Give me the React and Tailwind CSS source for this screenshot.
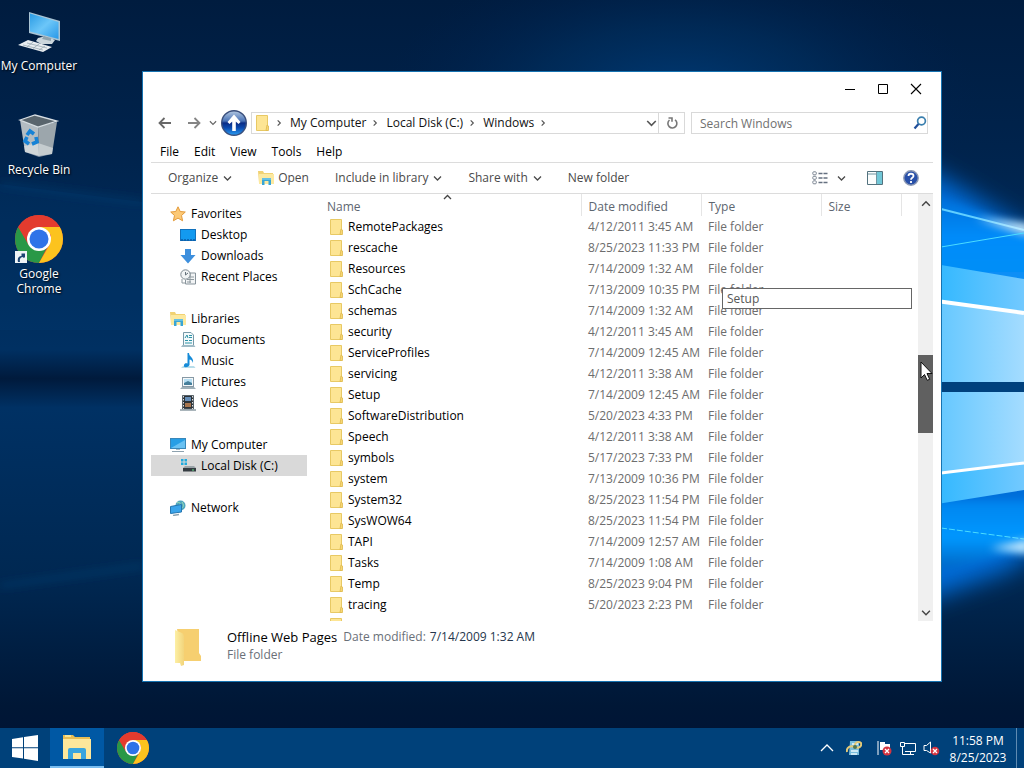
import React from "react";

const folders = [
  ["RemotePackages", "4/12/2011 3:45 AM"],
  ["rescache", "8/25/2023 11:33 PM"],
  ["Resources", "7/14/2009 1:32 AM"],
  ["SchCache", "7/13/2009 10:35 PM"],
  ["schemas", "7/14/2009 1:32 AM"],
  ["security", "4/12/2011 3:45 AM"],
  ["ServiceProfiles", "7/14/2009 12:45 AM"],
  ["servicing", "4/12/2011 3:38 AM"],
  ["Setup", "7/14/2009 12:45 AM"],
  ["SoftwareDistribution", "5/20/2023 4:33 PM"],
  ["Speech", "4/12/2011 3:38 AM"],
  ["symbols", "5/17/2023 7:33 PM"],
  ["system", "7/13/2009 10:36 PM"],
  ["System32", "8/25/2023 11:54 PM"],
  ["SysWOW64", "8/25/2023 11:54 PM"],
  ["TAPI", "7/14/2009 12:57 AM"],
  ["Tasks", "7/14/2009 1:08 AM"],
  ["Temp", "8/25/2023 9:04 PM"],
  ["tracing", "5/20/2023 2:23 PM"],
];

function Wallpaper() {
  return (
    <svg className="absolute inset-0 h-full w-full" viewBox="0 0 1024 728" preserveAspectRatio="none" aria-hidden="true">
      <defs>
        <linearGradient id="base" x1="0" y1="0" x2="0" y2="1">
          <stop offset="0" stopColor="#001c3f" />
          <stop offset="0.2" stopColor="#00234c" />
          <stop offset="0.48" stopColor="#003062" />
          <stop offset="0.52" stopColor="#001a3c" />
          <stop offset="0.56" stopColor="#003164" />
          <stop offset="0.79" stopColor="#002852" />
          <stop offset="0.97" stopColor="#001736" />
          <stop offset="1" stopColor="#001536" />
        </linearGradient>
        <radialGradient id="topGlow">
          <stop offset="0" stopColor="#004080" stopOpacity="0.85" />
          <stop offset="0.5" stopColor="#003468" stopOpacity="0.5" />
          <stop offset="1" stopColor="#002050" stopOpacity="0" />
        </radialGradient>
        <linearGradient id="upper" x1="0" y1="0" x2="0" y2="1">
          <stop offset="0" stopColor="#0068d0" />
          <stop offset="0.5" stopColor="#008cfa" />
          <stop offset="1" stopColor="#0a90f5" />
        </linearGradient>
        <linearGradient id="lower" x1="0" y1="0" x2="0" y2="1">
          <stop offset="0" stopColor="#0084ee" />
          <stop offset="0.5" stopColor="#0098ff" />
          <stop offset="1" stopColor="#005cb8" />
        </linearGradient>
        <linearGradient id="beam" gradientUnits="userSpaceOnUse" x1="941" y1="0" x2="1024" y2="0">
          <stop offset="0" stopColor="#35b9ff" />
          <stop offset="1" stopColor="#72c9ff" />
        </linearGradient>
        <linearGradient id="pane" gradientUnits="userSpaceOnUse" x1="941" y1="0" x2="1024" y2="0">
          <stop offset="0" stopColor="#66c8ff" />
          <stop offset="1" stopColor="#a4dcff" />
        </linearGradient>
        <filter id="soft" x="-50%" y="-50%" width="200%" height="200%"><feGaussianBlur stdDeviation="12" /></filter>
        <filter id="glow" x="-50%" y="-50%" width="200%" height="200%"><feGaussianBlur stdDeviation="4" /></filter>
        <filter id="thin" x="-20%" y="-50%" width="140%" height="200%"><feGaussianBlur stdDeviation="0.7" /></filter>
      </defs>
      <rect width="1024" height="728" fill="url(#base)" />
      <ellipse cx="680" cy="100" rx="300" ry="150" fill="url(#topGlow)" />
      <path d="M0 184 L143 202" stroke="#0a4a80" strokeWidth="2" filter="url(#glow)" />
      <path d="M0 184 L143 202 V330 H0Z" fill="#003a75" opacity="0.25" />
      <path d="M0 586 L143 566" stroke="#0a4a80" strokeWidth="2" filter="url(#glow)" />
      <path d="M900 155 L955 185 L1060 250 V530 L1010 570 L900 610Z" fill="#006cd8" filter="url(#soft)" />
      <path d="M900 185 L960 205 L1034 236 V290 H900Z" fill="url(#upper)" filter="url(#glow)" />
      <path d="M900 500 H1034 V545 L960 566 L900 575Z" fill="url(#lower)" filter="url(#glow)" />
      <path d="M941 209 L1024 230" stroke="#61cfff" strokeWidth="2" filter="url(#thin)" />
      <path d="M975 218 L1030 224 V236 Z" fill="#d5f1ff" filter="url(#glow)" />
      <path d="M941 247 L1024 233" stroke="#4bdcff" strokeWidth="1" />
      <path d="M900 262 L941 265 L1024 279 V382 H900Z" fill="url(#beam)" />
      <path d="M900 297 L1024 314 V382 H900Z" fill="url(#pane)" />
      <path d="M900 296 L1024 313" stroke="#fff" strokeWidth="4" filter="url(#thin)" />
      <rect x="900" y="382" width="124" height="10" fill="#00417d" />
      <path d="M900 392 H1024 V490 L900 510Z" fill="url(#beam)" />
      <path d="M900 392 H1024 V463 L900 478Z" fill="url(#pane)" />
      <path d="M900 478 L1024 463" stroke="#fff" strokeWidth="3" filter="url(#thin)" />
      <path d="M941 528 L1024 539" stroke="#4bdcff" strokeWidth="1" strokeDasharray="6 2" />
      <path d="M990 548 L1030 539 V554 Z" fill="#c5eaff" filter="url(#glow)" />
    </svg>
  );
}

function Chrome({ className, id }) {
  return (
    <svg className={className} viewBox="0 0 48 48" aria-hidden="true">
      <defs><clipPath id={id}><circle cx="24" cy="24" r="24" /></clipPath></defs>
      <g clipPath={`url(#${id})`}>
        <rect width="48" height="48" fill="#ea4335" />
        <path d="M3.2 12 L14.5 29.5 L24 35 L33.5 29.5 L24 48 H0 V12Z" fill="#299847" />
        <path d="M24 12 H48 V48 H24 L34.4 30 L36 20Z" fill="#fcc31e" />
        <path d="M3.2 12 L13.6 30 L24 12 H44.8 L40 0 H6Z" fill="#e33b2e" />
      </g>
      <circle cx="24" cy="24" r="12" fill="#fff" />
      <circle cx="24" cy="24" r="9.5" fill="#2f73e8" />
    </svg>
  );
}

function ComputerArt() {
  return (
    <svg className="h-12 w-12" viewBox="0 0 48 48" aria-hidden="true">
      <defs><linearGradient id="scr" x1="0" y1="0" x2="1" y2="1"><stop offset="0" stopColor="#2a9be4" /><stop offset="0.5" stopColor="#6cc6f8" /><stop offset="1" stopColor="#2898e8" /></linearGradient></defs>
      <path d="M14 5 L45 14 V34 L14 26Z" fill="#a9c4d4" />
      <path d="M15 6.5 L43.500 15 V32 L15 24.500Z" fill="url(#scr)" />
      <path d="M23 31 L31 29 L40 33 L37 37 H26 L21 34Z" fill="#cbd6dc" />
      <path d="M29 29 L36 31 V34 L27 32Z" fill="#8fa2ad" />
      <path d="M3 38 L13 33 L37 40 L28 45Z" fill="#e8edf0" />
      <path d="M8 38 L28 43 M12 36 L32 41 M12 40 L18 35 M18 41.500 L24 37 M24 43 L30 39" stroke="#8fa0aa" strokeWidth="0.7" />
    </svg>
  );
}

function BinArt() {
  return (
    <svg className="h-12 w-12" viewBox="0 0 48 48" aria-hidden="true">
      <path d="M5 9 L23 15 L24 45 L10 41Z" fill="#b3bcc2" />
      <path d="M42 11 L23 15 L24 45 L37 43Z" fill="#9ca6ac" />
      <path d="M5 9 L20 4 L42 10 L23 16Z" fill="#59656d" stroke="#d7dee2" strokeWidth="1.300" />
      <path d="M9 35 L23 32 L38 37 L37 43 L24 46 L10 41Z" fill="#e8ebed" opacity="0.55" />
      <g fill="none" stroke="#1682d6" strokeWidth="3.600">
        <path d="M12 24 L15 20 L19 23" /><path d="M21 26 L22 31 L17 33" /><path d="M14 33 L10 30 L12 26" />
      </g>
    </svg>
  );
}

function FolderIcon() {
  return (
    <svg className="h-4 w-[15px] shrink-0" viewBox="0 0 15 16" aria-hidden="true">
      <path d="M1.500 .5 H12.500 V15.500 H1.500Z" fill="#fde594" stroke="#e8c964" />
      <path d="M12 10 L13.500 11 V15.500 H11Z" fill="#f8d774" stroke="#ddb94e" strokeWidth="0.8" />
    </svg>
  );
}

function LibraryIcon({ className = "h-4 w-4" }) {
  return (
    <svg className={className} viewBox="0 0 16 16" aria-hidden="true">
      <path d="M0 1 H5 L6 3 H15 V13 H1Z" fill="#f1d273" />
      <path d="M1 4 H16 V14 H1Z" fill="#fce9a0" />
      <path d="M4 8 H13 V15 H10.500 V11 H6.500 V15 H4Z" fill="#38a5d6" />
      <path d="M4 8 H13 V10 H4Z" fill="#65c0e4" />
    </svg>
  );
}

function Chevron({ dir = "down", className = "h-[9px] w-[9px]" }) {
  const paths = { down: "M1 2.500 L4.500 6 L8 2.500", up: "M1 6 L4.500 2.500 L8 6", right: "M3 1.500 L6 4.500 L3 7.500" };
  return (
    <svg className={`shrink-0 ${className}`} viewBox="0 0 9 9" fill="none" stroke="currentColor" strokeWidth="1.300" aria-hidden="true">
      <path d={paths[dir]} />
    </svg>
  );
}

const art = {
  star: <path d="M8 .8 L10.200 5.500 L15.300 6 L11.500 9.500 L12.600 14.800 L8 12.100 L3.400 14.800 L4.500 9.500 L.7 6 L5.800 5.500Z" fill="#fcc976" stroke="#e39a3a" />,
  desktop: <><rect x=".5" y="2.500" width="15" height="11" fill="#139af0" stroke="#1272bd" /><path d="M1 13 H15" stroke="#0a5ca8" strokeWidth="1.500" strokeDasharray="2 1" /></>,
  down: <path d="M5 1 H11 V7 H15.500 L8 15.500 L.5 7 H5Z" fill="#3d8fdd" />,
  recent: <><path d="M6 4 H15.500 V15 H5.500 V11" fill="#f2f4f5" stroke="#87939b" /><path d="M7 8 H14 M7 10.500 H14 M7 13 H11 M10 4 V14" stroke="#8e999f" /><circle cx="5.500" cy="5.500" r="4.700" fill="#f1f4f5" stroke="#7d8990" /><path d="M5.500 3 V6 L8 4" fill="none" stroke="#65727a" /><path d="M2 10 V14 H6" fill="none" stroke="#8e999f" /></>,
  doc: <><path d="M3.500 .5 H11 L13.500 3 V14 H3.500Z" fill="#f3f9fb" stroke="#7799a8" /><path d="M5 6 L7 3 L8 6 M9 3.500 H12 M9 5.500 H12 M5 8.500 H8 M9 8.500 H12 M5 11 H12" fill="none" stroke="#2e94a8" /><path d="M1 15 L2.500 13 H14 L15.500 15Z" fill="#9fbac5" /></>,
  music: <><path d="M1 15 L3 13 H14 L15.500 15Z" fill="#b8ddea" /><path d="M9 0 C9 4 14 4 13 10 C12 7 11 7 9.500 6.500 V12 C8 15 3 15 4 12 C4.500 10 6 10 7.500 10.500 V0Z" fill="#168bd8" /></>,
  picture: <><rect x="2.500" y="3.500" width="11" height="9" fill="#f5f8fa" stroke="#8799a5" /><path d="M4 5 H12 V11 H4Z" fill="#b7dff3" /><path d="M4 9 L8 7 L12 9 V11 H4Z" fill="#467f9b" /><path d="M0 15 L2 13 H14 L16 15Z" fill="#9eafb8" /></>,
  video: <><path d="M2.500 .5 H13.500 V14 H2.500Z" fill="#2d3338" stroke="#59636a" /><path d="M5 2 H11 V6 H5Z" fill="#668eb8" /><path d="M5 8 H11 V12 H5Z" fill="#a8754e" /><path d="M3.500 1 V14 M12.500 1 V14" stroke="#dce1e4" strokeDasharray="1.500 1.500" /><path d="M0 15 H16" stroke="#8e9ca5" strokeWidth="1.500" /></>,
  computer: <><rect x=".5" y="1.500" width="15" height="10" fill="#279ee5" stroke="#3987b9" /><path d="M1 11 L15 3 V11Z" fill="#69c1f2" /><path d="M6 12 H10 V13 H6Z" fill="#a2bac7" /><path d="M2 14.500 H14" stroke="#8ea2af" /></>,
  disk: <><path d="M1 1 H3.500 V3.500 H1Z M4.500 1 H7 V3.500 H4.500Z M1 4.500 H3.500 V7 H1Z M4.500 4.500 H7 V7 H4.500Z" fill="#20aadd" /><path d="M3 10 L5 8 H14 L16 10Z" fill="#9ba4a9" /><path d="M3 10 H16 V13.500 H3Z" fill="#353c42" /><path d="M12 12 H14" stroke="#63df86" /></>,
  network: <><circle cx="10.500" cy="5.500" r="5" fill="#4fa5bf" /><path d="M7 3 C10 1 11 4 9 5 M12 2 C14 5 14 7 11 9" stroke="#9bdbb3" fill="none" /><path d="M.5 6.500 L11.500 4.500 V12 L.5 13.500Z" fill="#3ba5eb" stroke="#2476b0" /><path d="M3 15.500 L9 14.500" stroke="#8ca3b1" strokeWidth="1.500" /></>,
};

function SideIcon({ name }) {
  if (name === "library") return <LibraryIcon className="h-4 w-4 shrink-0" />;
  return <svg className="h-4 w-4 shrink-0" viewBox="0 0 16 16" aria-hidden="true">{art[name]}</svg>;
}

const groups = [
  { icon: "star", label: "Favorites", items: [["desktop", "Desktop"], ["down", "Downloads"], ["recent", "Recent Places"]] },
  { icon: "library", label: "Libraries", items: [["doc", "Documents"], ["music", "Music"], ["picture", "Pictures"], ["video", "Videos"]] },
  { icon: "computer", label: "My Computer", items: [["disk", "Local Disk (C:)"]] },
  { icon: "network", label: "Network", items: [] },
];

function Sidebar() {
  return (
    <nav aria-label="Places" className="flex w-[156px] shrink-0 flex-col gap-[21px] overflow-hidden pt-[9px]">
      {groups.map((g) => (
        <div key={g.label}>
          <button className="flex h-[21px] w-full items-center gap-[5px] pl-[19px] text-left"><SideIcon name={g.icon} />{g.label}</button>
          {g.items.map(([icon, label]) => (
            <button key={label} className={`flex h-[21px] w-full items-center gap-[5px] pl-[29px] text-left ${icon === "disk" ? "bg-[#d9d9d9]" : ""}`}>
              <SideIcon name={icon} />{label}
            </button>
          ))}
        </div>
      ))}
    </nav>
  );
}

function FileList() {
  return (
    <div className="relative ml-[14px] min-w-0 flex-1 overflow-hidden">
      <table className="w-full table-fixed border-collapse text-left text-[#6d6d6d]">
        <colgroup>
          <col /><col className="w-[120px]" /><col className="w-[120px]" /><col className="w-[80px]" /><col className="w-[17px]" />
        </colgroup>
        <thead>
          <tr className="h-[22px] text-[#5d6670]">
            <th className="relative pt-1 pl-[6px] font-normal">
              Name
              <Chevron dir="up" className="absolute -top-px left-[47%] h-[9px] w-[9px] text-[#444]" />
            </th>
            <th className="border-l border-[#e5e5e5] pt-1 pl-[7px] font-normal">Date modified</th>
            <th className="border-l border-[#e5e5e5] pt-1 pl-[7px] font-normal">Type</th>
            <th className="border-l border-[#e5e5e5] pt-1 pl-[7px] font-normal">Size</th>
            <td className="border-l border-[#e5e5e5]" />
          </tr>
        </thead>
        <tbody>
          {folders.map(([name, date]) => (
            <tr key={name} className="h-[21px] whitespace-nowrap">
              <td className="py-0 pl-2 text-black"><div className="flex items-center gap-1"><FolderIcon />{name}</div></td>
              <td className="py-0 pl-[7px]">{date}</td>
              <td className="py-0 pl-[7px]">File folder</td>
              <td /><td />
            </tr>
          ))}
          <tr className="h-[21px]"><td className="pl-2"><FolderIcon /></td><td /><td /><td /><td /></tr>
        </tbody>
      </table>
      <div role="tooltip" className="absolute top-[94px] right-[6px] flex h-[21px] w-[190px] items-center border border-[#666] bg-white pl-1 text-[#575757]">Setup</div>
    </div>
  );
}

function ExplorerWindow() {
  return (
    <main className="absolute top-[71px] right-[82px] bottom-[46px] left-[142px] flex flex-col border border-[#1673b1] bg-white px-2">
      <header className="flex h-[34px] shrink-0 items-center justify-end pr-px">
        <button aria-label="Minimize" className="flex h-full w-[33px] items-center justify-center"><svg className="h-3 w-3" viewBox="0 0 12 12"><path d="M1 6.500 H11" stroke="#000" /></svg></button>
        <button aria-label="Maximize" className="flex h-full w-[33px] items-center justify-center"><svg className="h-3 w-3" viewBox="0 0 12 12" fill="none"><path d="M1.500 1.500 H10.500 V10.500 H1.500Z" stroke="#000" /></svg></button>
        <button aria-label="Close" className="flex h-full w-[33px] items-center justify-center"><svg className="h-3 w-3" viewBox="0 0 12 12"><path d="M1 1 L11 11 M11 1 L1 11" stroke="#000" strokeWidth="1.100" /></svg></button>
      </header>

      <div className="flex h-[34px] shrink-0 items-center pr-[5px]">
        <button aria-label="Back" className="flex w-[28px] justify-center"><svg className="h-3 w-[14px]" viewBox="0 0 14 12" fill="none" stroke="#686868" strokeWidth="1.800"><path d="M13 6 H1.500 M6.500 1 L1.500 6 L6.500 11" /></svg></button>
        <button aria-label="Forward" className="flex w-[30px] justify-center"><svg className="h-3 w-[14px]" viewBox="0 0 14 12" fill="none" stroke="#858585" strokeWidth="1.800"><path d="M1 6 H12.500 M7.500 1 L12.500 6 L7.500 11" /></svg></button>
        <button aria-label="Recent locations" className="flex w-2 justify-center text-[#666]"><Chevron className="h-2 w-2" /></button>
        <button aria-label="Up" className="ml-[3px] shrink-0">
          <svg className="h-7 w-7" viewBox="0 0 28 28">
            <defs><linearGradient id="orb" x1="0" y1="0" x2="0" y2="1"><stop offset="0" stopColor="#b4c8e0" /><stop offset=".42" stopColor="#4a74b8" /><stop offset=".5" stopColor="#0a2c86" /><stop offset=".7" stopColor="#0b4bb0" /><stop offset="1" stopColor="#2ba0f5" /></linearGradient></defs>
            <circle cx="14" cy="14" r="12.300" fill="url(#orb)" stroke="#3a4f7c" strokeWidth="1.400" />
            <path d="M14 5.500 L20.500 13 L18.500 15 L15.800 12.500 V22 H12.200 V12.500 L9.500 15 L7.500 13Z" fill="#fff" />
          </svg>
        </button>
        <div className="ml-[3px] flex h-[22px] min-w-0 flex-1 items-center border border-[#d9d9d9] pl-[3px] text-[#111]">
          <FolderIcon />
          <Chevron dir="right" className="mx-[5px] h-2 w-2 text-[#555]" />
          {["My Computer", "Local Disk (C:)", "Windows"].map((c) => (
            <React.Fragment key={c}>
              <button className="ml-[2px] whitespace-nowrap">{c}</button>
              <Chevron dir="right" className="mx-[5px] h-2 w-2 text-[#555]" />
            </React.Fragment>
          ))}
          <button aria-label="Previous locations" className="ml-auto flex w-[13px] justify-center text-[#555]"><Chevron className="h-[11px] w-[11px]" /></button>
          <button aria-label="Refresh" className="flex h-full w-[26px] items-center justify-center border-l border-[#d9d9d9]">
            <svg className="h-3 w-3" viewBox="0 0 12 12" fill="none" stroke="#777" strokeWidth="1.600"><path d="M9 2.800 A4.500 4.500 0 1 1 3.500 3" /><path d="M2.500 1 H6 V4.800" /></svg>
          </button>
        </div>
        <div className="ml-[6px] flex h-[22px] w-[237px] items-center border border-[#d9d9d9] pl-2">
          <label htmlFor="search" className="sr-only">Search</label>
          <input id="search" placeholder="Search Windows" className="h-5 min-w-0 flex-1 outline-none placeholder:text-[#707070]" />
          <svg className="h-[14px] w-[14px]" viewBox="0 0 14 14" fill="none" aria-hidden="true"><circle cx="8.500" cy="5" r="3.900" stroke="#3a7fae" strokeWidth="1.700" /><path d="M5.500 8 L1.500 12.500" stroke="#1f4e9a" strokeWidth="2.200" /></svg>
        </div>
      </div>

      <div role="menubar" className="flex h-[22px] shrink-0 items-center gap-[15px] pt-px pl-[9px] text-black">
        {["File", "Edit", "View", "Tools", "Help"].map((m) => <button role="menuitem" key={m}>{m}</button>)}
      </div>

      <div className="flex h-8 shrink-0 items-center gap-[26px] border-y border-[#dcdcdc] pl-[17px] whitespace-nowrap text-[#4a4a4a]">
        <button className="flex items-center gap-[5px]">Organize<Chevron /></button>
        <button className="flex items-center gap-1"><LibraryIcon />Open</button>
        <button className="flex items-center gap-[5px]">Include in library<Chevron /></button>
        <button className="flex items-center gap-[5px]">Share with<Chevron /></button>
        <button>New folder</button>
        <div className="ml-auto flex items-center pr-[14px]">
          <button aria-label="Change view" className="mr-[9px]"><svg className="h-[14px] w-4" viewBox="0 0 16 14" fill="none"><rect x=".8" y=".8" width="3.500" height="3" rx="1" stroke="#7b8592" /><rect x=".8" y="5.300" width="3.500" height="3" rx="1" stroke="#7b8592" /><rect x=".8" y="9.800" width="3.500" height="3" rx="1" stroke="#7b8592" /><path d="M6.500 2.500 H15.500 M6.500 7 H15.500 M6.500 11.500 H15.500" stroke="#657080" strokeWidth="1.300" strokeDasharray="4 1" /></svg></button>
          <button aria-label="View options" className="mr-[21px]"><Chevron /></button>
          <button aria-label="Preview pane" className="mr-5"><svg className="h-[14px] w-4" viewBox="0 0 16 14"><path d="M.5 .5 H15.500 V13.500 H.5Z" fill="#fbfdfd" stroke="#53727e" /><path d="M10 1 H15 V13 H10Z" fill="#71c7d7" /><path d="M1 3 H9.500 M9.500 1 V13" stroke="#7095a2" /></svg></button>
          <button aria-label="Help topics"><svg className="h-4 w-4" viewBox="0 0 16 16"><circle cx="8" cy="8" r="7.200" fill="#2850a9" stroke="#8b98b4" strokeWidth="1.400" /><path d="M5.500 6 C5.500 3 10.500 3 10.500 6 C10.500 8 8 7.700 8 9.800 M8 11 V13" fill="none" stroke="#fff" strokeWidth="1.800" /></svg></button>
        </div>
      </div>

      <div className="flex min-h-0 flex-1 overflow-hidden">
        <Sidebar />
        <FileList />
        <div className="relative flex w-[15px] shrink-0 flex-col bg-[#f0f0f0] text-[#444]">
          <button aria-label="Scroll up" className="flex h-[19px] items-center justify-center"><Chevron dir="up" className="h-[10px] w-[10px]" /></button>
          <div className="grow-[142]" />
          <div className="grow-[78] bg-[#606060]" />
          <div className="grow-[171]" />
          <button aria-label="Scroll down" className="flex h-[17px] items-center justify-center"><Chevron className="h-[10px] w-[10px]" /></button>
          <svg className="absolute top-[39%] left-[2px] h-5 w-[13px]" viewBox="0 0 13 20" aria-hidden="true"><path d="M1 1 V17 L4.500 13.500 L7.200 19.300 L9.700 18.300 L7 12.500 H12Z" fill="#fff" stroke="#111" /></svg>
        </div>
      </div>

      <footer className="flex h-[60px] shrink-0 pl-[24px]">
        <svg className="mt-2 h-[38px] w-[28px]" viewBox="0 0 28 38" aria-hidden="true">
          <defs><linearGradient id="fold"><stop offset="0" stopColor="#fdf0a5" /><stop offset="1" stopColor="#f2d47b" /></linearGradient></defs>
          <path d="M2 0 H24 V24 L26 27 V32 H8Z" fill="#f6cf70" />
          <path d="M0 1 L7 4 C9 5 9 7 9 9 V36 L6 37 L5 34 L0 34Z" fill="url(#fold)" />
        </svg>
        <div className="ml-[24px] flex flex-col pt-[7px]">
          <div className="flex h-[18px] items-center gap-[6px] text-[#6a7078]"><span className="text-[13px] text-black">Offline Web Pages</span><span>Date modified:<span className="ml-1 text-[#26364d]">7/14/2009 1:32 AM</span></span></div>
          <div className="flex h-[18px] items-center text-[#6a7078]">File folder</div>
        </div>
      </footer>
    </main>
  );
}

function DesktopIcon({ label, children }) {
  return (
    <button className="flex h-[104px] w-[78px] flex-col items-center pt-[7px] leading-[15px] text-white [text-shadow:1px_1px_2px_#000]">
      {children}
      <span className="mt-[3px]">{label}</span>
    </button>
  );
}

function Taskbar() {
  return (
    <footer className="relative flex h-10 items-center bg-[#00417a] text-white">
      <button aria-label="Start" className="flex h-full w-[50px] items-center justify-center">
        <svg className="h-[26px] w-[26px]" viewBox="0 0 26 26" fill="#fff"><path d="M0 4 L11 2.300 V12.300 H0Z M12 2.100 L26 0 V12.300 H12Z M0 13.300 H11 V23.500 L0 22Z M12 13.300 H26 V26 L12 23.700Z" /></svg>
      </button>
      <button aria-label="File Explorer" className="flex h-full w-[54px] items-center justify-center border-b-2 border-[#79bdf0] bg-[#0058a4]">
        <svg className="h-[26px] w-[30px]" viewBox="0 0 30 26"><path d="M1 1 H11 L13 3 H28 V8 H1Z" fill="#e8bd55" /><path d="M3 2 H9" stroke="#fff0a8" strokeWidth="1.500" /><path d="M1 5 H29 V25 H1Z" fill="#fde79b" /><path d="M6 25 V16 Q6 14 8 14 H22 Q24 14 24 16 V25 H19 V19 H11 V25Z" fill="#39a5de" /></svg>
      </button>
      <button aria-label="Google Chrome" className="flex h-full w-[58px] items-center justify-center"><Chrome id="cr-task" className="h-8 w-8" /></button>
      <div className="ml-auto flex h-full items-center">
        <button aria-label="Show hidden icons" className="mr-3"><svg className="h-2 w-[14px]" viewBox="0 0 14 8" fill="none" stroke="#fff" strokeWidth="1.300"><path d="M1 7 L7 1 L13 7" /></svg></button>
        <svg className="mr-[14px] h-4 w-4" viewBox="0 0 16 16" aria-hidden="true"><path d="M4 1 H13 V15 H3Z" fill="#78bddd" /><path d="M6 4 H12 M5 11 H12 M5 14 H11" stroke="#e9f8fd" strokeWidth="1.500" /><path d="M1 12 C0 7 5 5 9 7 S16 6 15 3 C13 1 9 2 9 5" fill="none" stroke="#e3c977" strokeWidth="2" /><circle cx="9" cy="7" r="2" fill="#53744c" /></svg>
        <svg className="mr-[8px] h-4 w-4" viewBox="0 0 16 16" aria-hidden="true"><path d="M2 1 V15" stroke="#fff" /><path d="M4 2 H9 V4 H14 V10 H4Z" fill="#fff" /><circle cx="11" cy="11" r="4.500" fill="#d53440" /><path d="M9 9 L13 13 M13 9 L9 13" stroke="#fff" strokeWidth="1.300" /></svg>
        <svg className="mr-[7px] h-4 w-4" viewBox="0 0 16 16" fill="none" stroke="#fff" aria-hidden="true"><path d="M5 3.500 H15.500 V11.500 H5 M10.500 12 V14.500 M7 14.500 H14" /><path d="M.5 2.500 H4.500 V6.500 H.5Z M2.500 7 V14.500 H7" /></svg>
        <svg className="mr-[11px] h-4 w-[17px]" viewBox="0 0 17 16" fill="none" aria-hidden="true"><path d="M1 5.500 H3.500 L7.500 2 V13 L3.500 10.500 H1Z" stroke="#fff" /><circle cx="12" cy="11" r="4.300" fill="#d53440" /><path d="M10 9 L14 13 M14 9 L10 13" stroke="#fff" strokeWidth="1.300" /></svg>
        <div className="flex w-[54px] flex-col items-center pt-px leading-[17px] whitespace-nowrap"><span>11:58 PM</span><span>8/25/2023</span></div>
        <button aria-label="Show desktop" className="ml-[11px] h-full w-2 border-l border-[#5f8bb2]" />
      </div>
    </footer>
  );
}

export default function App() {
  return (
    <div className="flex h-screen flex-col overflow-hidden bg-[#001c3f] font-['Open_Sans','Noto_Sans',sans-serif] text-[12px] leading-4">
      <div className="relative min-h-0 flex-1">
        <Wallpaper />
        <div className="relative flex flex-col items-start">
          <DesktopIcon label="My Computer"><ComputerArt /></DesktopIcon>
          <DesktopIcon label="Recycle Bin"><BinArt /></DesktopIcon>
          <DesktopIcon label="Google Chrome">
            <span className="relative">
              <Chrome id="cr-desk" className="h-12 w-12" />
              <svg className="absolute bottom-0 left-0 h-3 w-3" viewBox="0 0 12 12" aria-hidden="true"><path d="M0 0 H12 V12 H0Z" fill="#eef3f6" /><path d="M3 11 C2 7 4 5 6.500 5 V2.500 H10 V6 L9 7 L7.500 6 C5 7 4.500 8 5 11Z" fill="#1b4473" /></svg>
            </span>
          </DesktopIcon>
        </div>
        <ExplorerWindow />
      </div>
      <Taskbar />
    </div>
  );
}
